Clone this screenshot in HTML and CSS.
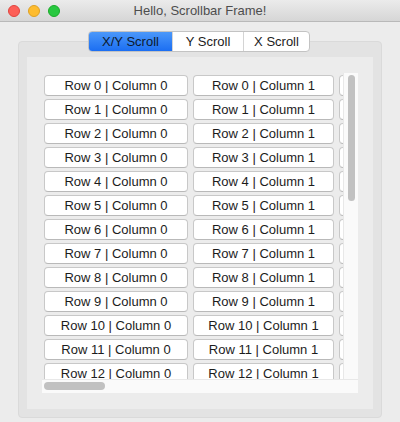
FILE: index.html
```html
<!DOCTYPE html>
<html>
<head>
<meta charset="utf-8">
<link rel="stylesheet" href="styles.css">
</head>
<body>
<div class="window">
  <div class="titlebar">
    <div class="lights">
      <span class="light red"></span>
      <span class="light yellow"></span>
      <span class="light green"></span>
    </div>
    <div class="title">Hello, Scrollbar Frame!</div>
  </div>
  <div class="body">
    <div class="tabs">
      <div class="tab selected t1">X/Y Scroll</div>
      <div class="tab t2">Y Scroll</div>
      <div class="tab t3">X Scroll</div>
    </div>
    <div class="pane">
      <div class="inner">
        <div class="scroller">
          <div class="toprow">
            <div class="viewport">
              <div class="grid">
                <div class="btn">Row 0 | Column 0</div><div class="btn">Row 0 | Column 1</div><div class="btn">Row 0 | Column 2</div>
                <div class="btn">Row 1 | Column 0</div><div class="btn">Row 1 | Column 1</div><div class="btn">Row 1 | Column 2</div>
                <div class="btn">Row 2 | Column 0</div><div class="btn">Row 2 | Column 1</div><div class="btn">Row 2 | Column 2</div>
                <div class="btn">Row 3 | Column 0</div><div class="btn">Row 3 | Column 1</div><div class="btn">Row 3 | Column 2</div>
                <div class="btn">Row 4 | Column 0</div><div class="btn">Row 4 | Column 1</div><div class="btn">Row 4 | Column 2</div>
                <div class="btn">Row 5 | Column 0</div><div class="btn">Row 5 | Column 1</div><div class="btn">Row 5 | Column 2</div>
                <div class="btn">Row 6 | Column 0</div><div class="btn">Row 6 | Column 1</div><div class="btn">Row 6 | Column 2</div>
                <div class="btn">Row 7 | Column 0</div><div class="btn">Row 7 | Column 1</div><div class="btn">Row 7 | Column 2</div>
                <div class="btn">Row 8 | Column 0</div><div class="btn">Row 8 | Column 1</div><div class="btn">Row 8 | Column 2</div>
                <div class="btn">Row 9 | Column 0</div><div class="btn">Row 9 | Column 1</div><div class="btn">Row 9 | Column 2</div>
                <div class="btn">Row 10 | Column 0</div><div class="btn">Row 10 | Column 1</div><div class="btn">Row 10 | Column 2</div>
                <div class="btn">Row 11 | Column 0</div><div class="btn">Row 11 | Column 1</div><div class="btn">Row 11 | Column 2</div>
                <div class="btn">Row 12 | Column 0</div><div class="btn">Row 12 | Column 1</div><div class="btn">Row 12 | Column 2</div>
              </div>
            </div>
            <div class="vbar"><div class="vthumb"></div></div>
          </div>
          <div class="hbar"><div class="hthumb"></div></div>
        </div>
      </div>
    </div>
  </div>
</div>
</body>
</html>
```
FILE: styles.css
```css
html, body {
  margin: 0;
  padding: 0;
}
body {
  width: 400px;
  height: 422px;
  overflow: hidden;
  background: #ececec;
  font-family: "Liberation Sans", Arial, sans-serif;
  font-size: 13px;
  color: #1c1c1c;
}
.window {
  width: 400px;
  height: 422px;
  background: #ececec;
}
.titlebar {
  height: 21px;
  border-bottom: 1px solid #b9b9b9;
  background: linear-gradient(#ebebeb, #d6d6d6);
  display: flex;
  align-items: center;
  position: relative;
}
.lights {
  display: flex;
  gap: 8px;
  padding-left: 8px;
  position: absolute;
  left: 0;
  top: 5px;
}
.light {
  width: 12px;
  height: 12px;
  border-radius: 50%;
  box-sizing: border-box;
}
.red { background: #fd5f57; border: 1px solid #e0443e; }
.yellow { background: #febc2e; border: 1px solid #dea123; }
.green { background: #28c840; border: 1px solid #1aab29; }
.title {
  flex: 1;
  text-align: center;
  color: #4d4d4d;
  font-size: 13px;
  line-height: 21px;
}
.body {
  padding-top: 9px;
}
.tabs {
  display: flex;
  margin-left: 88px;
  width: 222px;
  height: 21px;
  box-sizing: border-box;
  border: 1px solid #c3c3c3;
  border-radius: 4px;
  background: #ffffff;
  position: relative;
  z-index: 1;
  overflow: hidden;
}
.tab {
  display: flex;
  align-items: center;
  justify-content: center;
  font-size: 13px;
  color: #1c1c1c;
  border-left: 1px solid #d4d4d4;
  box-sizing: border-box;
}
.tab.t1 { width: 83px; border-left: none; }
.tab.t2 { width: 71px; }
.tab.t3 { flex: 1; }
.tab.selected {
  background: linear-gradient(#4b98fa, #1b6ef2);
  color: #0d1a2e;
}
.pane {
  margin-top: -11px;
  margin-left: 18px;
  width: 364px;
  height: 377px;
  box-sizing: border-box;
  background: #e3e3e3;
  border: 1px solid #dadada;
  border-radius: 4px;
  padding: 15px 8px 8px 8px;
}
.inner {
  width: 346px;
  height: 352px;
  background: #ececec;
  box-sizing: border-box;
  padding: 16px 0 0 15px;
}
.scroller {
  width: 316px;
  display: flex;
  flex-direction: column;
}
.toprow {
  display: flex;
  height: 306px;
}
.viewport {
  width: 301px;
  height: 306px;
  overflow: hidden;
}
.grid {
  display: grid;
  grid-template-columns: 144px 141px 141px;
  grid-auto-rows: 21px;
  column-gap: 5px;
  row-gap: 3px;
  padding: 2px 0 0 2px;
  width: max-content;
}
.btn {
  background: #ffffff;
  border: 1px solid #c8c8c8;
  border-bottom-color: #b9b9b9;
  border-radius: 4px;
  box-sizing: border-box;
  display: flex;
  align-items: center;
  justify-content: center;
  font-size: 13px;
  color: #1c1c1c;
  white-space: nowrap;
}
.vbar {
  width: 15px;
  height: 306px;
  box-sizing: border-box;
  background: #fafafa;
  border-left: 1px solid #e8e8e8;
  padding: 2px 0 0 4px;
}
.vthumb {
  width: 7px;
  height: 126px;
  border-radius: 4px;
  background: #c1c1c1;
}
.hbar {
  height: 14px;
  box-sizing: border-box;
  background: #fafafa;
  border-top: 1px solid #e8e8e8;
  padding: 2px 0 0 2px;
}
.hthumb {
  width: 61px;
  height: 8px;
  border-radius: 4px;
  background: #c1c1c1;
}
```
